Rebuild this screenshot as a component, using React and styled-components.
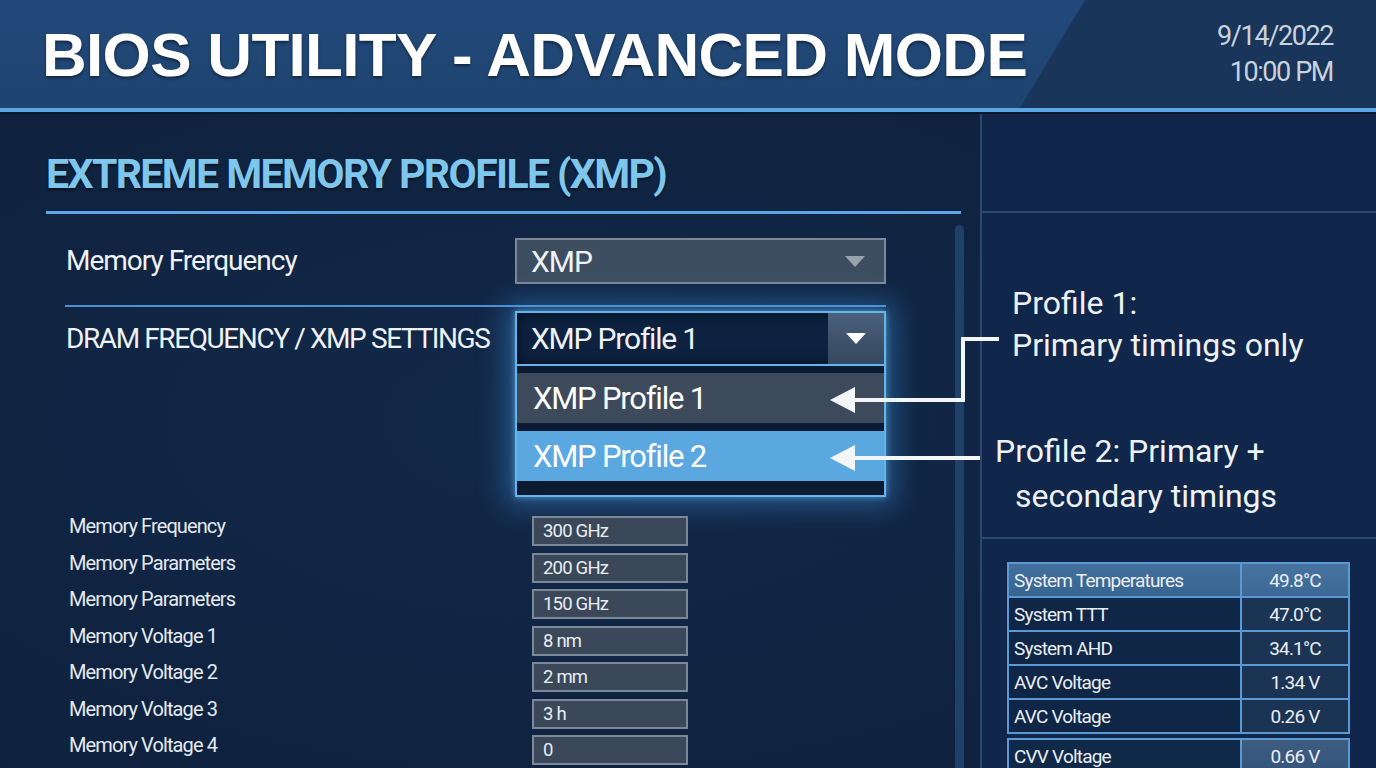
import React from 'react';
import styled, { createGlobalStyle } from 'styled-components';

const GlobalStyle = createGlobalStyle`
  html, body {
    margin: 0;
    padding: 0;
    background: #0e223c;
  }
  body {
    font-family: Roboto, "Liberation Sans", sans-serif;
  }
  * {
    box-sizing: border-box;
  }
`;

const Screen = styled.div`
  position: relative;
  width: 1376px;
  height: 768px;
  overflow: hidden;
  display: flex;
  flex-direction: column;
  color: #eef2f6;
  background: radial-gradient(ellipse at 40% 55%, #13294a 0%, #0f2340 60%, #0d1f38 100%);
`;

const Header = styled.header`
  position: relative;
  flex: none;
  height: 112px;
  display: flex;
  align-items: center;
  justify-content: space-between;
  padding: 0 43px 0 42px;
  background: linear-gradient(180deg, #22497a 0%, #1e446f 100%);
  border-bottom: 4px solid #5ba6e4;
  box-shadow: 0 2px 0 #09182b;

  /* darker slanted panel behind the clock */
  &::before {
    content: '';
    position: absolute;
    top: 0;
    right: 0;
    bottom: 0;
    width: 356px;
    background: #19355a;
    clip-path: polygon(65px 0, 100% 0, 100% 100%, 0 100%);
  }
`;

const Title = styled.h1`
  position: relative;
  margin: 0;
  font-family: "Liberation Sans", Arial, sans-serif;
  font-weight: 700;
  font-size: 62px;
  letter-spacing: -0.7px;
  color: #ffffff;
  text-shadow: 0 2px 3px rgba(0, 0, 0, 0.45);
`;

const Clock = styled.div`
  position: relative;
  text-align: right;
  font-size: 27px;
  letter-spacing: -1.4px;
  line-height: 36px;
  color: #c9d3de;
`;

const Body = styled.div`
  flex: 1;
  display: flex;
  min-height: 0;
`;

const Main = styled.main`
  width: 980px;
  flex: none;
  display: flex;
`;

const Content = styled.div`
  width: 915px;
  margin-left: 46px;
  display: flex;
  flex-direction: column;
`;

const ScrollTrack = styled.div`
  width: 9px;
  margin: 113px 0 0 -6px;
  border-radius: 5px 5px 0 0;
  background: #1d4168;
`;

const SectionTitle = styled.h2`
  margin: 37px 0 0;
  padding-bottom: 12px;
  border-bottom: 3px solid #5ba6e4;
  font-size: 41px;
  line-height: 50px;
  font-weight: 700;
  letter-spacing: -1.6px;
  color: #7fc6ec;
  text-shadow: 0 2px 2px rgba(0, 0, 0, 0.5);
`;

const SettingRow = styled.div`
  display: flex;
  align-items: ${(p) => (p.$top ? 'flex-start' : 'center')};
  margin-top: ${(p) => p.$gap}px;
`;

const SettingLabel = styled.div`
  width: 469px;
  padding-left: 20px;
  font-size: 28px;
  letter-spacing: ${(p) => (p.$caps ? '-1.4px' : '-1px')};
  white-space: nowrap;
  line-height: ${(p) => (p.$boxed ? '55px' : '36px')};
  color: #eef2f6;
  text-transform: ${(p) => (p.$caps ? 'uppercase' : 'none')};
`;

const Caret = styled.span`
  width: 0;
  height: 0;
  border-left: 10px solid transparent;
  border-right: 10px solid transparent;
  border-top: 11px solid ${(p) => (p.$light ? '#ffffff' : '#9aa3ad')};
`;

const Select = styled.div`
  width: 371px;
  height: 46px;
  display: flex;
  align-items: center;
  justify-content: space-between;
  padding: 0 19px 0 14px;
  background: #3e4e61;
  border: 2px solid #7b8898;
  font-size: 30px;
  letter-spacing: -1px;
`;

const Rule = styled.div`
  height: 2px;
  width: 821px;
  margin: 21px 0 0 19px;
  background: #4b90d2;
`;

const Dropdown = styled.div`
  width: 371px;
  box-shadow: 0 0 26px 8px rgba(70, 160, 235, 0.42), 0 0 6px rgba(130, 205, 255, 0.6);
`;

const OpenSelect = styled.div`
  height: 55px;
  display: flex;
  align-items: stretch;
  border: 2px solid #63b5ee;
  background: #0d2240;
  box-shadow: inset 0 0 14px rgba(0, 0, 0, 0.65);
`;

const OpenValue = styled.span`
  flex: 1;
  display: flex;
  align-items: center;
  padding-left: 14px;
  font-size: 30px;
  letter-spacing: -1.2px;
`;

const CaretButton = styled.span`
  width: 56px;
  display: flex;
  align-items: center;
  justify-content: center;
  background: linear-gradient(180deg, #4b607a 0%, #34485f 100%);
`;

const Menu = styled.div`
  display: flex;
  flex-direction: column;
  gap: 8px;
  padding: 7px 0 14px;
  border: 2px solid #63b5ee;
  border-top: 0;
  background: #0b1c32;
`;

const Option = styled.div`
  height: 50px;
  display: flex;
  align-items: center;
  padding-left: 16px;
  font-size: 31px;
  letter-spacing: -1.2px;
  color: #ffffff;
  background: ${(p) => (p.$active ? '#5ba8e0' : '#3c4a5b')};
`;

const ParamList = styled.div`
  display: flex;
  flex-direction: column;
  gap: 6.5px;
  margin-top: 19px;
`;

const ParamRow = styled.div`
  display: flex;
  align-items: flex-start;
`;

const ParamLabel = styled.div`
  width: 486px;
  padding-left: 23px;
  font-size: 20px;
  letter-spacing: -0.9px;
  line-height: 20px;
  color: #e4eaf1;
`;

const ValueBox = styled.div`
  width: 156px;
  height: 30px;
  display: flex;
  align-items: center;
  padding-left: 9px;
  font-size: 18.5px;
  letter-spacing: -0.8px;
  color: #e8edf3;
  background: #3a4859;
  border: 2px solid #7a8898;
`;

const Side = styled.aside`
  flex: 1;
  display: flex;
  flex-direction: column;
  border-left: 2px solid #29496e;
  background: #10264a;
`;

const SideTop = styled.div`
  flex: none;
  height: 101px;
  border-bottom: 2px solid #29496e;
`;

const Notes = styled.div`
  flex: none;
  height: 326px;
  padding-top: 69px;
  border-bottom: 2px solid #2a4b71;
  font-size: 32px;
  color: #eef2f6;
`;

const Note = styled.div`
  padding-left: ${(p) => p.$indent}px;
  margin-top: ${(p) => p.$gap || 0}px;
  line-height: ${(p) => p.$lh}px;
`;

const NoteLine = styled.div`
  padding-left: ${(p) => p.$shift || 0}px;
`;

const SensorArea = styled.div`
  flex: none;
  padding: 23px 0 0 25px;
`;

const SensorTable = styled.div`
  width: 343px;
  display: grid;
  grid-template-columns: 231px 1fr;
  grid-auto-rows: 32px;
  gap: 2px;
  padding: 2px;
  margin-bottom: 4px;
  background: #5a99d4;
`;

const Cell = styled.div`
  display: flex;
  align-items: center;
  justify-content: ${(p) => (p.$value ? 'center' : 'flex-start')};
  padding-left: ${(p) => (p.$value ? 0 : 5)}px;
  font-size: 19px;
  letter-spacing: -0.8px;
  color: #e9eef4;
  background: ${(p) => p.$bg};
`;

const Callouts = styled.svg`
  position: absolute;
  inset: 0;
  pointer-events: none;
`;

const params = [
  ['Memory Frequency', '300 GHz'],
  ['Memory Parameters', '200 GHz'],
  ['Memory Parameters', '150 GHz'],
  ['Memory Voltage 1', '8 nm'],
  ['Memory Voltage 2', '2 mm'],
  ['Memory Voltage 3', '3 h'],
  ['Memory Voltage 4', '0'],
];

const sensors = [
  ['System Temperatures', '49.8°C'],
  ['System TTT', '47.0°C'],
  ['System AHD', '34.1°C'],
  ['AVC Voltage', '1.34 V'],
  ['AVC Voltage', '0.26 V'],
];

const labelBg = (i) => (i === 0 ? 'linear-gradient(180deg, #426f9b, #386490)' : '#0f2646');
const valueBg = (i) => (i === 0 ? 'linear-gradient(180deg, #4673a0, #3b6894)' : '#1c3454');

const App = () => (
  <>
    <GlobalStyle />
    <Screen>
      <Header>
        <Title>BIOS UTILITY - ADVANCED MODE</Title>
        <Clock>
          <div>9/14/2022</div>
          <div>10:00 PM</div>
        </Clock>
      </Header>

      <Body>
        <Main>
          <Content>
            <SectionTitle>EXTREME MEMORY PROFILE (XMP)</SectionTitle>

            <SettingRow $gap={24}>
              <SettingLabel>Memory Frerquency</SettingLabel>
              <Select>
                <span>XMP</span>
                <Caret />
              </Select>
            </SettingRow>

            <Rule />

            <SettingRow $top $gap={4}>
              <SettingLabel $boxed $caps>DRAM Frequency / XMP Settings</SettingLabel>
              <Dropdown>
                <OpenSelect>
                  <OpenValue>XMP Profile 1</OpenValue>
                  <CaretButton>
                    <Caret $light />
                  </CaretButton>
                </OpenSelect>
                <Menu>
                  <Option>XMP Profile 1</Option>
                  <Option $active>XMP Profile 2</Option>
                </Menu>
              </Dropdown>
            </SettingRow>

            <ParamList>
              {params.map(([label, value], i) => (
                <ParamRow key={i}>
                  <ParamLabel>{label}</ParamLabel>
                  <ValueBox>{value}</ValueBox>
                </ParamRow>
              ))}
            </ParamList>
          </Content>
          <ScrollTrack />
        </Main>

        <Side>
          <SideTop />
          <Notes>
            <Note $indent={30} $lh={42}>
              <NoteLine>Profile 1:</NoteLine>
              <NoteLine>Primary timings only</NoteLine>
            </Note>
            <Note $indent={13} $lh={45} $gap={63}>
              <NoteLine>Profile 2: Primary +</NoteLine>
              <NoteLine $shift={20}>secondary timings</NoteLine>
            </Note>
          </Notes>
          <SensorArea>
            <SensorTable>
              {sensors.map(([label, value], i) => (
                <React.Fragment key={i}>
                  <Cell $bg={labelBg(i)}>{label}</Cell>
                  <Cell $value $bg={valueBg(i)}>{value}</Cell>
                </React.Fragment>
              ))}
            </SensorTable>
            <SensorTable>
              <Cell $bg="#112948">CVV Voltage</Cell>
              <Cell $value $bg="linear-gradient(180deg, #3d5c80, #35547a)">0.66 V</Cell>
            </SensorTable>
          </SensorArea>
        </Side>
      </Body>

      {/* leader lines from the notes to the menu entries */}
      <Callouts width="1376" height="768" viewBox="0 0 1376 768">
        <g fill="none" stroke="#f3f6f9" strokeWidth="4" strokeLinejoin="miter">
          <polyline points="999,339 963,339 963,400 852,400" />
          <polyline points="980,458 852,458" />
        </g>
        <g fill="#f3f6f9">
          <polygon points="830,400 855,387 855,413" />
          <polygon points="830,458 855,445 855,471" />
        </g>
      </Callouts>
    </Screen>
  </>
);

export default App;
